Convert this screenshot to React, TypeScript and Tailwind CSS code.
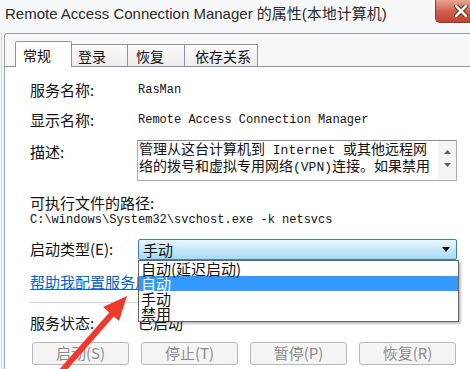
export default function App() {
  return (
    <div className="relative w-[470px] h-[369px] overflow-hidden bg-[#f6f7f8] flex flex-col font-['Noto_Sans_CJK_SC',sans-serif] text-[#111]">
      {/* title bar */}
      <div className="h-[33px] flex items-start shrink-0">
        <div className="pl-[5px] pt-[4px] text-[15px] leading-[20px] text-[#2b2b2b] whitespace-nowrap font-['Liberation_Sans','Noto_Sans_CJK_SC',sans-serif]">
          Remote Access Connection Manager 的属性(本地计算机)
        </div>
        <div className="ml-auto mt-0 w-[35px] h-[23px] rounded-bl-[5px] border-l border-b border-[#8a3b33] bg-gradient-to-b from-[#e8a493] via-[#d2614f] to-[#c3412f] flex items-center justify-end pr-[2px]">
          <svg width="14" height="12" viewBox="0 0 14 12">
            <path d="M2 1 L12 11 M12 1 L2 11" stroke="#5a1f16" strokeWidth="4.5" strokeLinecap="round" />
            <path d="M2 1 L12 11 M12 1 L2 11" stroke="#ffffff" strokeWidth="2.5" strokeLinecap="round" />
          </svg>
        </div>
      </div>

      {/* window frame */}
      <div className="flex-1 ml-[1px] border-l border-[#d6d6d6] pl-[2px]">
        <div className="h-full border-l border-t border-[#9aa0a6] rounded-tl-[3px] flex flex-col">
          {/* tabs */}
          <div className="h-[32px] flex items-end pl-[10px] text-[14px] shrink-0">
            <div className="relative z-10 -mb-px w-[57px] h-[26px] border border-b-0 border-[#8d939a] rounded-t-[2px] bg-white pl-[7px] pt-[4px] leading-[18px]">
              常规
            </div>
            <div className="w-[56px] h-[22px] border-t border-r border-[#8d939a] bg-gradient-to-b from-[#fbfbfb] to-[#ececec] pl-[6px] pt-[2px] leading-[18px]">
              登录
            </div>
            <div className="w-[57px] h-[22px] border-t border-r border-[#8d939a] bg-gradient-to-b from-[#fbfbfb] to-[#ececec] pl-[8px] pt-[2px] leading-[18px]">
              恢复
            </div>
            <div className="w-[73px] h-[22px] border-t border-r border-[#8d939a] bg-gradient-to-b from-[#fbfbfb] to-[#ececec] pl-[10px] pt-[2px] leading-[18px]">
              依存关系
            </div>
          </div>

          {/* panel */}
          <div className="flex-1 border-t border-[#8d939a] bg-white pl-[25px] text-[15px]">
            <div className="mt-[13px] h-[20px] flex items-center">
              <div className="w-[108px]">服务名称:</div>
              <div className="font-['Liberation_Mono',monospace] text-[12px]">RasMan</div>
            </div>
            <div className="mt-[10px] h-[20px] flex items-center">
              <div className="w-[108px]">显示名称:</div>
              <div className="font-['Liberation_Mono',monospace] text-[12px]">Remote Access Connection Manager</div>
            </div>
            <div className="mt-[10px] h-[41px] flex">
              <div className="w-[107px] pt-[2px] leading-[20px]">描述:</div>
              <div className="w-[320px] h-[41px] border border-[#abadb3] border-t-[#8a8f96] flex">
                <div className="flex-1 pl-[1px] pt-0 text-[14px] leading-[14px] whitespace-nowrap">
                  <div>
                    管理从这台计算机到<span className="font-['Liberation_Mono',monospace] text-[13px]"> Internet </span>或其他远程网
                  </div>
                  <div>
                    络的拨号和虚拟专用网络<span className="font-['Liberation_Mono',monospace] text-[13px]">(VPN)</span>连接。如果禁用
                  </div>
                </div>
                <div className="w-[18px] bg-[#f4f4f4] flex flex-col items-center pt-[9px] gap-[9px]">
                  <svg width="7" height="4" viewBox="0 0 7 4">
                    <path d="M0 4 L3.5 0 L7 4 Z" fill="#5c5c5c" />
                  </svg>
                  <svg width="7" height="4" viewBox="0 0 7 4">
                    <path d="M0 0 L3.5 4 L7 0 Z" fill="#5c5c5c" />
                  </svg>
                </div>
              </div>
            </div>
            <div className="mt-[12px] h-[20px] flex items-center">可执行文件的路径:</div>
            <div className="h-[14px] flex items-center font-['Liberation_Mono',monospace] text-[12px]">
              {"C:\\windows\\System32\\svchost.exe -k netsvcs"}
            </div>
            <div className="mt-[12px] h-[21px] flex items-center">
              <div className="w-[108px]">启动类型(E):</div>
              <div className="relative z-20 w-[319px] h-[21px]">
                <div className="h-full rounded-[2px] border border-[#3c7fb1] bg-gradient-to-b from-[#eaf6fd] via-[#c9e7f8] to-[#a8d8f3] flex items-center pl-[4px] pr-[6px]">
                  <span className="leading-[18px]">手动</span>
                  <svg className="ml-auto" width="8" height="5" viewBox="0 0 8 5">
                    <path d="M0 0 L8 0 L4 5 Z" fill="#111" />
                  </svg>
                </div>
                {/* open dropdown */}
                <div className="absolute left-0 top-[21px] w-[321px] border border-[#646464] bg-white shadow-[2px_2px_2px_rgba(0,0,0,0.25)] text-[15px] leading-[15px]">
                  <div className="h-[15px] pl-[2px] whitespace-nowrap">自动(延迟启动)</div>
                  <div className="h-[15px] pl-[2px] bg-[#3399ff] text-white">自动</div>
                  <div className="h-[15px] pl-[2px]">手动</div>
                  <div className="h-[15px] pl-[2px]">禁用</div>
                </div>
              </div>
            </div>
            <div className="mt-[14px] h-[16px] flex items-center">
              <span className="text-[#0066cc] underline leading-[16px] whitespace-nowrap">帮助我配置服务启动选项。</span>
            </div>
            <div className="mt-[12px] h-px w-[427px] bg-[#c9d2d8]" />
            <div className="mt-[12px] h-[16px] flex items-center">
              <div className="w-[108px]">服务状态:</div>
              <div>已启动</div>
            </div>
            <div className="mt-[11px] w-[424px] ml-[2px] grid grid-cols-4 gap-[12px] text-[#8c8c8c]">
              <div className="h-[23px] rounded-[3px] border border-[#b5b9bd] bg-[#f4f4f4] flex items-center justify-center">启动(S)</div>
              <div className="h-[23px] rounded-[3px] border border-[#b5b9bd] bg-[#f4f4f4] flex items-center justify-center">停止(T)</div>
              <div className="h-[23px] rounded-[3px] border border-[#b5b9bd] bg-[#f4f4f4] flex items-center justify-center">暂停(P)</div>
              <div className="h-[23px] rounded-[3px] border border-[#b5b9bd] bg-[#f4f4f4] flex items-center justify-center">恢复(R)</div>
            </div>
          </div>
        </div>
      </div>

      {/* red annotation arrow */}
      <svg className="absolute inset-0 pointer-events-none z-30" width="470" height="369" viewBox="0 0 470 369">
        <line x1="54" y1="380" x2="112" y2="314" stroke="#ee3a2c" strokeWidth="6" />
        <polygon points="127,296 119,321 103,307" fill="#ee3a2c" />
      </svg>
    </div>
  )
}
